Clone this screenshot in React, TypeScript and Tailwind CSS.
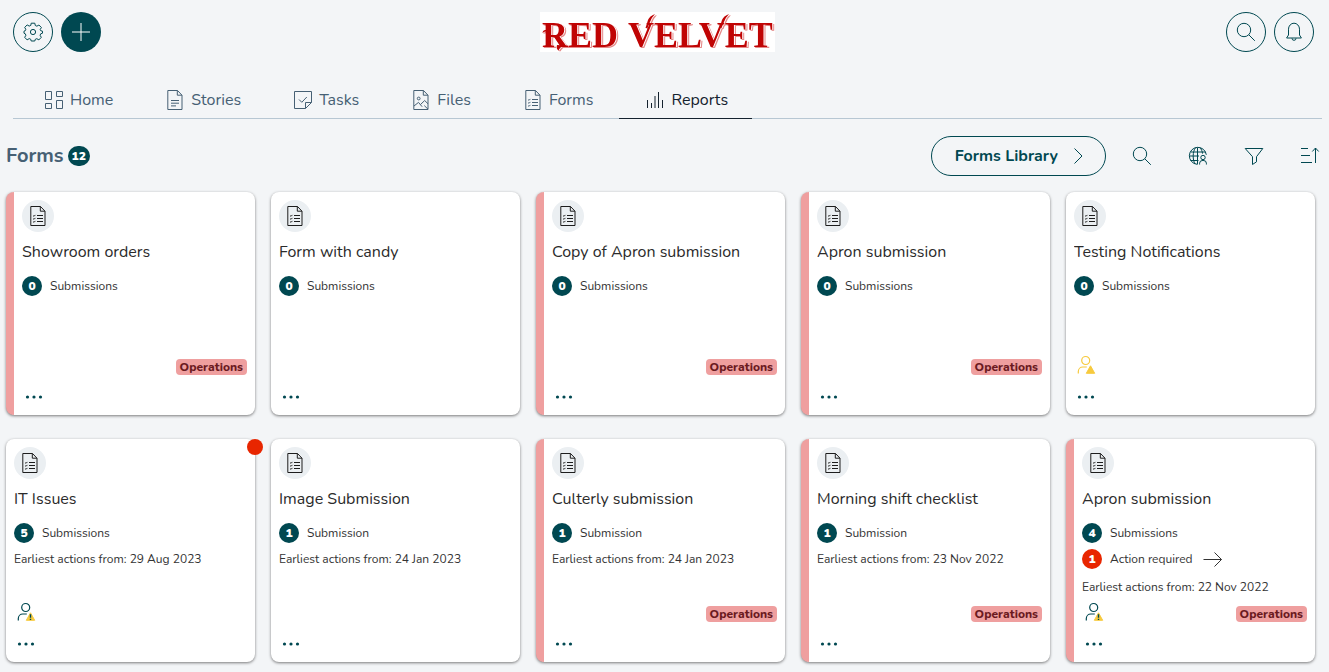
import type { ReactNode } from 'react';

type IconProps = { children: ReactNode; className?: string };

function Icon({ children, className = 'size-6' }: IconProps) {
  return (
    <svg viewBox="0 0 24 24" fill="none" stroke="currentColor" strokeWidth="1" className={`shrink-0 ${className}`} aria-hidden="true">
      {children}
    </svg>
  );
}

const GearIcon = () => (
  <Icon>
    <circle cx="12" cy="12" r="2.6" />
    <path d="M10.2 3.2h3.6l.5 2.3 1.6.7 2-1.2 2.5 2.5-1.2 2 .5 1.2 1.8.5v2l-1.8.6-.6 1.5 1.2 2-2.4 2.6-2.1-1.2-1.5.6-.5 1.7h-3.6l-.5-1.8-1.5-.6-2.1 1.3-2.4-2.6 1.2-2-.6-1.5-1.3-.6v-2l1.3-.5.5-1.4-1.1-1.9 2.5-2.5 2 1.2 1.6-.7z" strokeLinejoin="round" />
  </Icon>
);
const PlusIcon = () => (
  <Icon>
    <path d="M12 3v18M3 12h18" />
  </Icon>
);
const SearchIcon = () => (
  <Icon>
    <circle cx="10" cy="10" r="6.7" />
    <path d="M14.8 14.8l6 6" />
  </Icon>
);
const BellIcon = () => (
  <Icon>
    <path d="M6.5 15V9.2a5.5 6 0 0 1 11 0V15l1.9 3H4.6z" strokeLinejoin="round" />
    <path d="M10 18.3a2 2 0 0 0 4 0" />
  </Icon>
);
const HomeIcon = () => (
  <Icon>
    <path d="M3.5 3.5h6v8h-6zM14.5 3.5h6v5h-6zM3.5 15.5h6v5h-6zM14.5 12.5h6v8h-6z" />
  </Icon>
);
const Page = () => (
  <>
    <path d="M4.8 2.500h9.700L19 7.200V21.500H4.800z" />
    <path d="M14.300 2.500V7.200H19" />
  </>
);
const StoriesIcon = () => (
  <Icon>
    <Page />
    <path d="M8 12.500h8M8 15.200h8M8 17.900h5" />
  </Icon>
);
const TasksIcon = () => (
  <Icon>
    <path d="M14.500 20.500h-11v-17h17v11z" />
    <path d="M14.500 20.500v-6h6M8 11.500l2.800 2.800 5-5.300" />
  </Icon>
);
const FilesIcon = () => (
  <Icon>
    <Page />
    <circle cx="9.700" cy="10.500" r="1.400" />
    <path d="M5 18l4.500-3.600 3.600 4.300M11.500 16.500l4.200-4 3.300 3.300M15.300 17.600l3.700 3.600" />
  </Icon>
);
const FormIcon = () => (
  <Icon>
    <Page />
    <path d="M11 11.500h6M11 14.500h6M11 17.500h6M7.200 11.600l.8.8 1.400-1.500M7.200 14.600l.8.8 1.400-1.500M7.200 17.600l.8.8 1.400-1.500" />
  </Icon>
);
const ReportsIcon = () => (
  <Icon>
    <path d="M4.500 12v8M8.500 15v5M12 8v12M15.500 4v16M19.500 12v8" />
  </Icon>
);
const GlobeUserIcon = () => (
  <Icon>
    <path d="M11 20.300a8.500 8.500 0 1 1 9.300-9.500M11.500 3.500v17M9 20C6.500 15.500 6.500 8 9.500 3.600M14 3.600c1.400 1.700 2.300 3.700 2.500 6M4.500 8h15M3.300 12H13M4.500 16.500h8" />
    <circle cx="17" cy="13.500" r="2.200" />
    <path d="M13.600 20.500v-1.300a3.400 2.800 0 0 1 6.800 0v1.300" />
  </Icon>
);
const FilterIcon = () => (
  <Icon>
    <path d="M3.200 4.500h17.600l-6.300 8.200v5.100l-4 2.700v-7.800z" />
  </Icon>
);
const SortIcon = () => (
  <Icon>
    <path d="M3 4.500h7M3 11.500h9M3 18.500h11M17.500 19V4M14.300 7.500l3.200-3.500 3.200 3.500" />
  </Icon>
);
const ChevronIcon = () => (
  <Icon>
    <path d="M8.500 4.500l7.500 7.500-7.500 7.500" />
  </Icon>
);
const ArrowIcon = () => (
  <Icon>
    <path d="M2.500 12.500h18M13.500 5.500l7 7-7 7" />
  </Icon>
);
const DotsIcon = () => (
  <Icon>
    <g fill="currentColor" stroke="none">
      <circle cx="5.500" cy="12" r="1.600" />
      <circle cx="12" cy="12" r="1.600" />
      <circle cx="18.500" cy="12" r="1.600" />
    </g>
  </Icon>
);
function UserAlertIcon({ solid }: { solid?: boolean }) {
  return (
    <Icon className={solid ? 'size-6 text-[#f7ca3e]' : 'size-6 text-[#004851]'}>
      <circle cx="11.700" cy="7.500" r="4" strokeWidth="1.200" />
      <path d="M4.300 20.500v-2a4.500 4.500 0 0 1 4.500-4.500h4" strokeWidth="1.200" />
      <path d="M16.500 12.800l4.200 7.500h-8.400z" fill="#f7ca3e" stroke="#f7ca3e" strokeLinejoin="round" />
      {!solid && <path d="M16.500 14.300v3.400M16.500 18.700v1.200" strokeWidth="1.400" />}
    </Icon>
  );
}

function Logo() {
  return (
    <svg viewBox="0 0 235 40" className="h-10 w-[235px] overflow-visible" role="img" aria-label="Red Velvet">
      <rect width="235" height="40" fill="#fff" />
      <g fill="#c00404" className="[filter:drop-shadow(1px_0_0_#fff)_drop-shadow(1px_1px_0_#e58a8a)]">
        <g fontFamily='"Liberation Serif", serif' fontWeight="700" fontSize="36">
          <text x="2" y="35">RED</text>
          <text x="88" y="35">VELVET</text>
        </g>
        <path d="M105.500 16L108 8Q109.500 4 115 2Q112 5 110 10L107.500 16z" />
        <path d="M179.500 16L182 8Q183.500 4 189 2Q186 5 184 10L181.500 16z" />
        <path d="M2.500 21Q3 17 9 18V19.500Q5 18.500 2.500 21z" />
        <path d="M17 33L25 33.500Q20 34.500 18.500 38.500Q16 37 17 33z" />
      </g>
    </svg>
  );
}

const roundButton = 'flex size-10 items-center justify-center rounded-full border border-[#004851] text-[#004851]';

const tabs = [
  { label: 'Home', icon: <HomeIcon /> },
  { label: 'Stories', icon: <StoriesIcon /> },
  { label: 'Tasks', icon: <TasksIcon /> },
  { label: 'Files', icon: <FilesIcon /> },
  { label: 'Forms', icon: <FormIcon /> },
  { label: 'Reports', icon: <ReportsIcon />, active: true },
];

type FormCard = {
  title: string;
  count: number;
  tagged?: boolean;
  earliest?: string;
  actions?: number;
  user?: 'solid' | 'outline';
  unread?: boolean;
};

const cards: FormCard[] = [
  { title: 'Showroom orders', count: 0, tagged: true },
  { title: 'Form with candy', count: 0 },
  { title: 'Copy of Apron submission', count: 0, tagged: true },
  { title: 'Apron submission', count: 0, tagged: true },
  { title: 'Testing Notifications', count: 0, user: 'solid' },
  { title: 'IT Issues', count: 5, earliest: '29 Aug 2023', user: 'outline', unread: true },
  { title: 'Image Submission', count: 1, earliest: '24 Jan 2023' },
  { title: 'Culterly submission', count: 1, tagged: true, earliest: '24 Jan 2023' },
  { title: 'Morning shift checklist', count: 1, tagged: true, earliest: '23 Nov 2022' },
  { title: 'Apron submission', count: 4, tagged: true, earliest: '22 Nov 2022', actions: 1, user: 'outline' },
];

function Card({ card }: { card: FormCard }) {
  return (
    <article
      className={`relative flex min-h-[223px] flex-col rounded-lg bg-white p-2 shadow-[0_1px_3px_rgba(0,0,0,0.5)] ${
        card.tagged ? 'border-l-8 border-[#ef9f9f]' : ''
      }`}
    >
      {card.unread && <span className="absolute -right-2 top-0 size-4 rounded-full bg-[#e82600]" />}
      <span className="flex size-8 items-center justify-center rounded-full bg-[#ebeff2] text-[#1d1d1d]">
        <FormIcon />
      </span>
      <h2 className="mt-2 truncate text-base leading-6 text-[#2b2b2b]">{card.title}</h2>
      <div className="mt-3 flex items-center gap-2 text-xs leading-5 text-[#333]">
        <span className="flex size-5 items-center justify-center rounded-full bg-[#004851] font-black text-white">{card.count}</span>
        {card.count === 1 ? 'Submission' : 'Submissions'}
      </div>
      {card.actions && (
        <button type="button" className="mt-1 flex h-6 items-center gap-2 text-xs text-[#333]">
          <span className="flex size-5 items-center justify-center rounded-full bg-[#e82600] font-black text-white">{card.actions}</span>
          Action required
          <ArrowIcon />
        </button>
      )}
      {card.earliest && <p className="mt-1.5 text-xs leading-5 text-[#333]">Earliest actions from: {card.earliest}</p>}
      <div className="mt-auto flex h-6 items-end justify-between">
        {card.user ? <UserAlertIcon solid={card.user === 'solid'} /> : <span />}
        {card.tagged && <span className="mb-0.5 rounded-sm bg-[#ef9f9f] px-1 text-xs leading-4 font-extrabold text-[#6b1a1f]">Operations</span>}
      </div>
      <button type="button" aria-label="More options" className="mt-2 mb-[-2px] self-start text-[#004851]">
        <DotsIcon />
      </button>
    </article>
  );
}

export default function App() {
  return (
    <div className="min-h-screen bg-[#f3f5f7] font-['Nunito','Open_Sans',sans-serif]">
      <header className="mr-3.5 grid grid-cols-[1fr_auto_1fr] items-center pt-3">
        <div className="flex gap-2 pl-[13px]">
          <button type="button" aria-label="Settings" className={roundButton}><GearIcon /></button>
          <button type="button" aria-label="Create" className="flex size-10 items-center justify-center rounded-full bg-[#004851] text-white"><PlusIcon /></button>
        </div>
        <Logo />
        <div className="flex justify-end gap-2 pr-px">
          <button type="button" aria-label="Search" className={roundButton}><SearchIcon /></button>
          <button type="button" aria-label="Notifications" className={roundButton}><BellIcon /></button>
        </div>
      </header>

      <nav className="mt-[29px] mr-[7px] ml-[13px] flex gap-0.5 border-b border-[#b7c7d3] pl-[5px]">
        {tabs.map((tab) => (
          <a
            key={tab.label}
            href="#"
            className={`-mb-px flex h-[38px] items-center gap-1 border-b px-6 text-base ${
              tab.active ? 'border-[#14222e] text-[#14222e]' : 'border-transparent text-[#466074]'
            }`}
          >
            {tab.icon}
            {tab.label}
          </a>
        ))}
      </nav>

      <main className="pl-1.5">
        <div className="mt-[17px] mr-[7px] flex items-center justify-between">
          <h1 className="flex items-center gap-1 text-xl font-bold text-[#466074]">
            Forms
            <span className="flex h-5 items-center rounded-full bg-[#004851] px-1 text-xs font-black text-white">12</span>
          </h1>
          <div className="flex items-center gap-8 text-[#004851]">
            <button type="button" className="-mr-2 flex h-10 items-center gap-2 rounded-full border border-[#004851] pr-[15px] pl-[23px] text-base font-bold">
              Forms Library
              <ChevronIcon />
            </button>
            <button type="button" aria-label="Search forms"><SearchIcon /></button>
            <button type="button" aria-label="Audience"><GlobeUserIcon /></button>
            <button type="button" aria-label="Filter"><FilterIcon /></button>
            <button type="button" aria-label="Sort"><SortIcon /></button>
          </div>
        </div>

        <section className="mt-4 mr-3.5 grid grid-cols-5 gap-x-4 gap-y-6 pb-2.5">
          {cards.map((card, index) => (
            <Card key={index} card={card} />
          ))}
        </section>
      </main>
    </div>
  );
}
